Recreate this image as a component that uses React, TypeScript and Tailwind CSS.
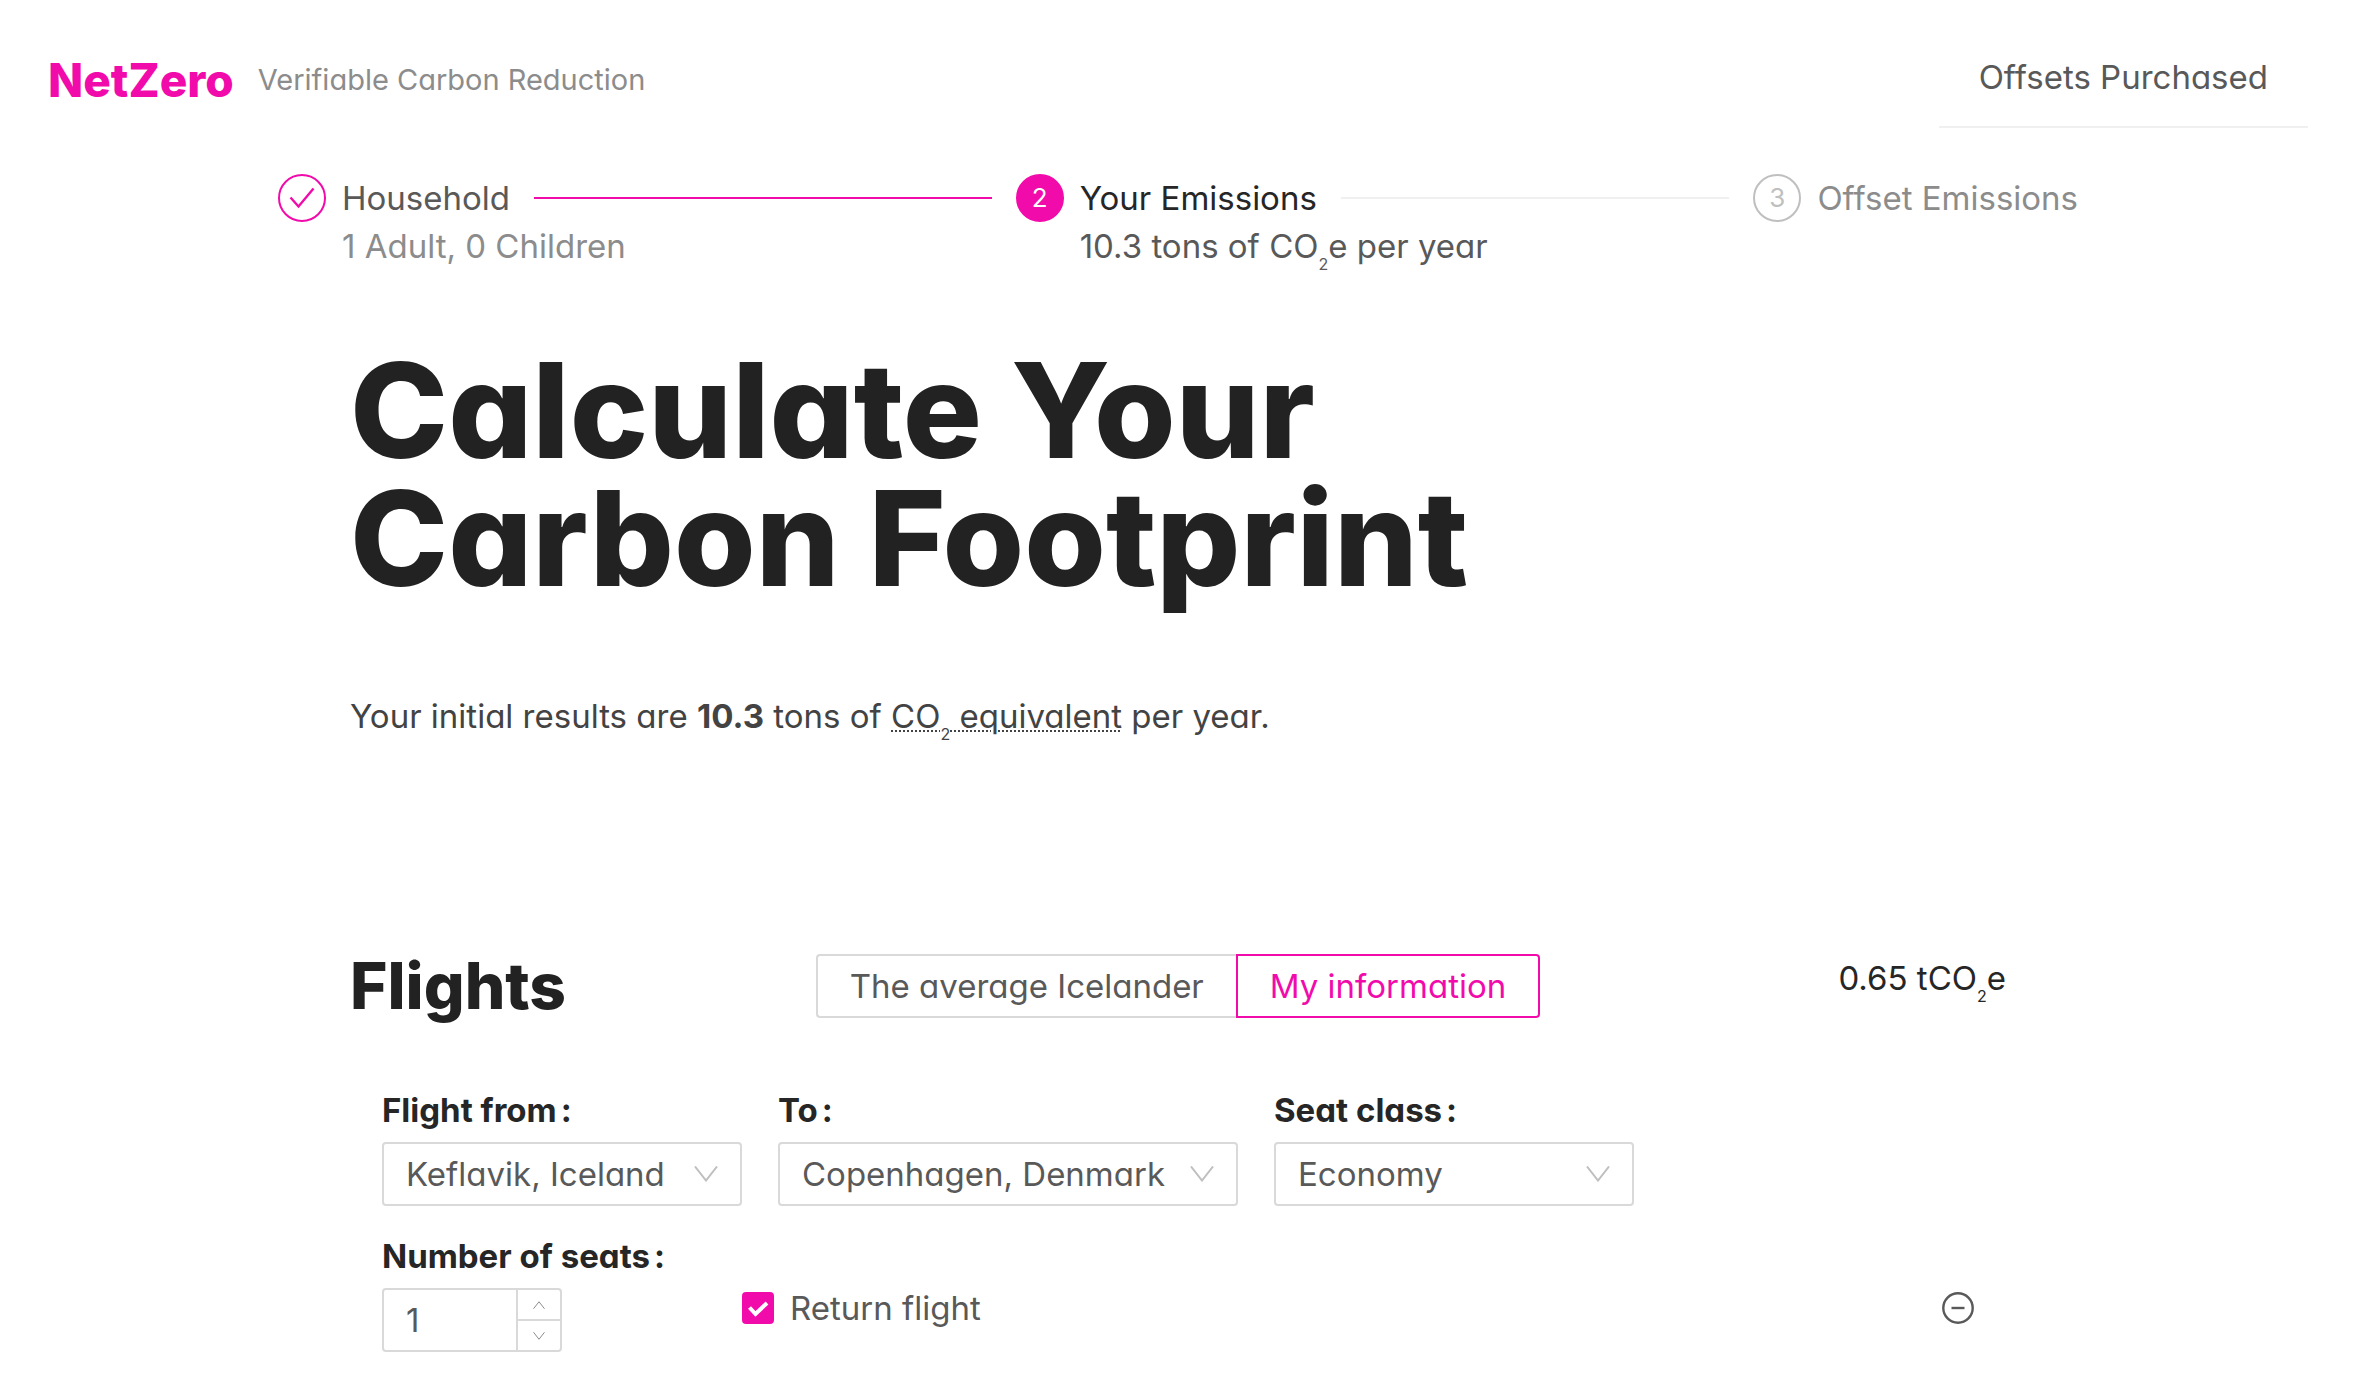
import { useState, type ReactNode } from "react";

function CO2({ suffix = "" }: { suffix?: string }) {
  return (
    <>
      CO<sub className="align-sub text-[16px] leading-none">2</sub>
      {suffix}
    </>
  );
}

function Chevron({ up = false, className }: { up?: boolean; className: string }) {
  return (
    <svg viewBox="0 0 24 16" fill="none" stroke="currentColor" aria-hidden="true" className={className}>
      <path d={up ? "M1 15.5 12 1.5 23 15.5" : "M1 .5 12 14.5 23 .5"} strokeWidth="2" />
    </svg>
  );
}

type StepState = "finished" | "current" | "waiting";

const circleStyle: Record<StepState, string> = {
  finished: "border-[#f20bab] text-[#f20bab]",
  current: "border-[#f20bab] bg-[#f20bab] text-white",
  waiting: "border-[#bfbfbf] text-[#bfbfbf]",
};
const titleStyle: Record<StepState, string> = {
  finished: "text-[#595959]",
  current: "text-[#262626]",
  waiting: "text-[#8c8c8c]",
};

function Step({
  state,
  number,
  title,
  description,
  last = false,
}: {
  state: StepState;
  number: number;
  title: string;
  description?: ReactNode;
  last?: boolean;
}) {
  return (
    <li className={`flex items-start gap-4 ${last ? "flex-none" : "flex-1"}`}>
      <span
        className={`flex size-12 flex-none items-center justify-center rounded-full border-2 text-[26px] leading-none ${circleStyle[state]}`}
      >
        {state === "finished" ? (
          <svg viewBox="0 0 26 22" fill="none" stroke="currentColor" aria-label="Done" className="h-[22px] w-[26px]">
            <path d="M1.500 10.500 9.500 19.500 24.500 1.500" strokeWidth="2.400" />
          </svg>
        ) : (
          number
        )}
      </span>
      <div className="min-w-0 flex-1">
        <div className="flex h-12 items-center gap-6">
          <span className={`whitespace-nowrap ${titleStyle[state]}`}>{title}</span>
          {!last && (
            <span className={`mr-6 h-[2px] flex-1 ${state === "finished" ? "bg-[#f20bab]" : "bg-[#f0f0f0]"}`} />
          )}
        </div>
        {description && (
          <p className={`h-12 leading-[48px] ${state === "finished" ? "text-[#8c8c8c]" : "text-[#595959]"}`}>
            {description}
          </p>
        )}
      </div>
    </li>
  );
}

function FieldLabel({ htmlFor, children }: { htmlFor: string; children: ReactNode }) {
  return (
    <label htmlFor={htmlFor} className="flex h-12 items-center gap-1 whitespace-nowrap font-bold text-[#262626]">
      {children}
      <span>:</span>
    </label>
  );
}

function SelectField({
  id,
  label,
  options,
  width,
}: {
  id: string;
  label: string;
  options: string[];
  width: string;
}) {
  return (
    <div className={width}>
      <FieldLabel htmlFor={id}>{label}</FieldLabel>
      <div className="mt-2 grid h-16 items-center rounded-sm border-2 border-[#d9d9d9]">
        <select
          id={id}
          className="col-start-1 row-start-1 h-full w-full appearance-none bg-transparent pl-[22px] pr-12 text-[#595959] outline-none"
        >
          {options.map((o) => (
            <option key={o}>{o}</option>
          ))}
        </select>
        <Chevron className="pointer-events-none col-start-1 row-start-1 mr-[22px] h-4 w-6 justify-self-end text-[#bfbfbf]" />
      </div>
    </div>
  );
}

export default function App() {
  const [mine, setMine] = useState(true);
  const [seats, setSeats] = useState(1);
  const [returning, setReturning] = useState(true);

  return (
    <div className="min-h-screen bg-white font-['Inter',sans-serif] text-[33px] leading-[48px] text-[#262626] [font-feature-settings:'cv11'] [font-optical-sizing:none]">
      <header className="flex items-start justify-between px-12">
        <div className="flex items-center gap-6 pt-12">
          <a href="#" className="text-[46px] leading-[64px] font-extrabold text-[#f20bab]">
            NetZero
          </a>
          <span className="text-[29px] text-[#8c8c8c]">Verifiable Carbon Reduction</span>
        </div>
        <nav className="h-32 border-b-2 border-[#f0f0f0] px-10 pt-[53px]">
          <a href="#" className="text-[#595959]">
            Offsets Purchased
          </a>
        </nav>
      </header>

      <ol className="mx-auto mt-[46px] flex max-w-[1800px]">
        <Step state="finished" number={1} title="Household" description="1 Adult, 0 Children" />
        <Step
          state="current"
          number={2}
          title="Your Emissions"
          description={
            <>
              10.3 tons of <CO2 suffix="e" /> per year
            </>
          }
        />
        <Step state="waiting" number={3} title="Offset Emissions" last />
      </ol>

      <main className="mx-auto max-w-[1656px]">
        <h1 className="mt-[76px] text-[132px] leading-[128px] font-extrabold text-[#222222]">
          Calculate Your
          <br />
          Carbon Footprint
        </h1>
        <p className="mt-[90px] text-[#434343]">
          Your initial results are <strong>10.3</strong> tons of{" "}
          <abbr className="underline decoration-dotted decoration-2 underline-offset-2">
            <CO2 /> equivalent
          </abbr>{" "}
          per year.
        </p>

        <section className="mt-[214px]">
          <div className="grid grid-cols-[1fr_auto_1fr]">
            <h2 className="text-[64px] leading-[64px] font-extrabold text-[#222222]">Flights</h2>
            <div className="flex h-16">
              <button
                type="button"
                aria-pressed={!mine}
                onClick={() => setMine(false)}
                className={`rounded-l-sm border-2 px-8 ${mine ? "border-r-0 border-[#d9d9d9] text-[#595959]" : "border-[#f20bab] text-[#f20bab]"}`}
              >
                The average Icelander
              </button>
              <button
                type="button"
                aria-pressed={mine}
                onClick={() => setMine(true)}
                className={`rounded-r-sm border-2 px-8 ${mine ? "border-[#f20bab] text-[#f20bab]" : "border-l-0 border-[#d9d9d9] text-[#595959]"}`}
              >
                My information
              </button>
            </div>
            <p className="text-right">
              0.65 t<CO2 suffix="e" />
            </p>
          </div>

          <form className="mt-[68px] px-8">
            <div className="flex gap-9">
              <SelectField id="from" label="Flight from" width="w-[360px]" options={["Keflavik, Iceland"]} />
              <SelectField id="to" label="To" width="w-[460px]" options={["Copenhagen, Denmark"]} />
              <SelectField id="seat" label="Seat class" width="w-[360px]" options={["Economy"]} />
            </div>

            <div className="mt-[26px] flex items-end">
              <div className="w-[360px]">
                <FieldLabel htmlFor="seats">Number of seats</FieldLabel>
                <div className="mt-2 flex h-16 w-[180px] rounded-sm border-2 border-[#d9d9d9]">
                  <input
                    id="seats"
                    type="text"
                    inputMode="numeric"
                    value={seats}
                    onChange={(e) => setSeats(Number(e.target.value) || 0)}
                    className="min-w-0 flex-1 pl-[22px] text-[#595959] outline-none"
                  />
                  <div className="flex w-11 flex-col border-l-2 border-[#d9d9d9] text-[#8c8c8c]">
                    <button
                      type="button"
                      aria-label="More seats"
                      onClick={() => setSeats(seats + 1)}
                      className="flex flex-1 items-center justify-center border-b-2 border-[#d9d9d9]"
                    >
                      <Chevron up className="h-2 w-3" />
                    </button>
                    <button
                      type="button"
                      aria-label="Fewer seats"
                      onClick={() => setSeats(Math.max(0, seats - 1))}
                      className="flex flex-1 items-center justify-center"
                    >
                      <Chevron className="h-2 w-3" />
                    </button>
                  </div>
                </div>
              </div>
              <div className="mb-5 flex flex-1 items-center justify-between">
                <label className="flex items-center gap-4 text-[#595959]">
                  <span className="grid size-8">
                    <input
                      type="checkbox"
                      checked={returning}
                      onChange={(e) => setReturning(e.target.checked)}
                      className="col-start-1 row-start-1 size-8 appearance-none rounded-sm border-2 border-[#d9d9d9] checked:border-[#f20bab] checked:bg-[#f20bab]"
                    />
                    <svg
                      viewBox="0 0 32 32"
                      fill="none"
                      stroke="white"
                      strokeWidth="4"
                      aria-hidden="true"
                      className="pointer-events-none col-start-1 row-start-1 size-8"
                    >
                      <path d="M7.500 15.500 13.500 22 25 11" />
                    </svg>
                  </span>
                  Return flight
                </label>
                <button type="button" aria-label="Remove flight" className="text-[#595959]">
                  <svg viewBox="0 0 32 32" fill="none" stroke="currentColor" className="size-8">
                    <circle cx="16" cy="16" r="14.700" strokeWidth="2.400" />
                    <path d="M9.500 16h13" strokeWidth="2.400" />
                  </svg>
                </button>
              </div>
            </div>
          </form>
        </section>
      </main>
    </div>
  );
}
